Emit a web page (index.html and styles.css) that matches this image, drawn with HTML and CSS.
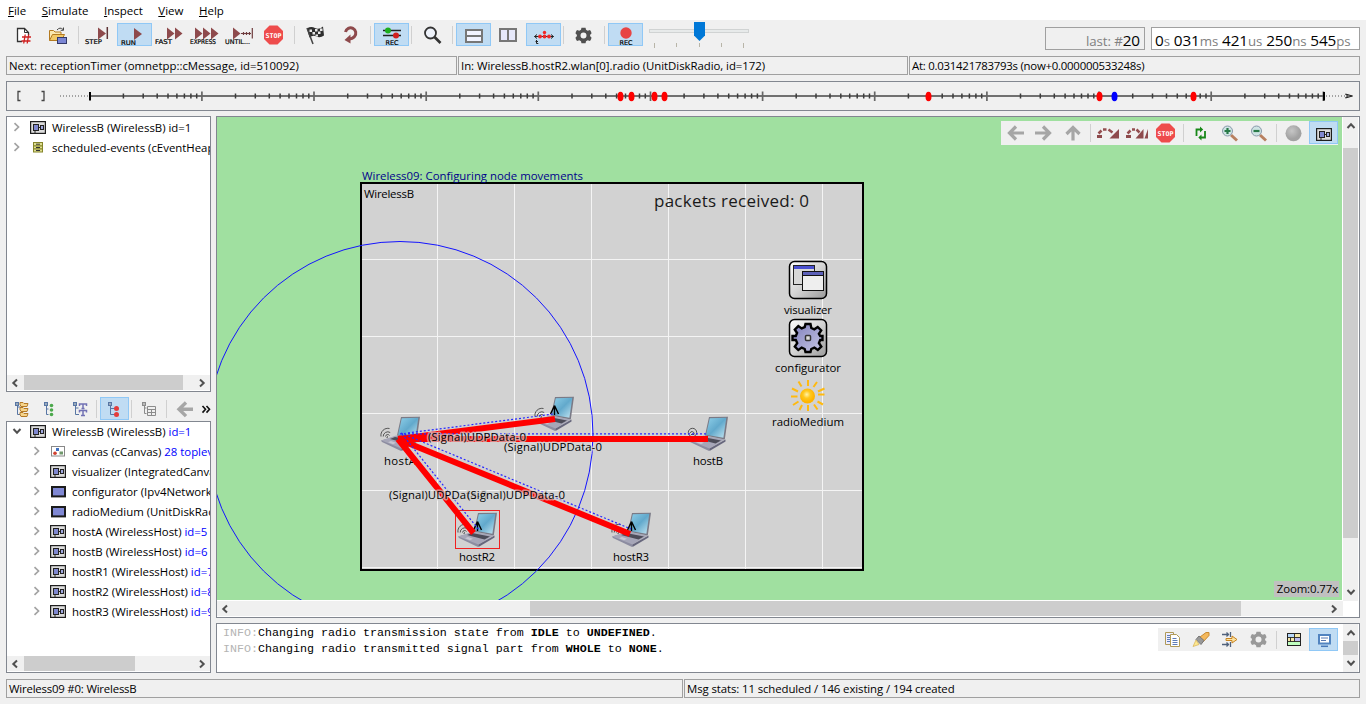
FILE: index.html
```html
<!DOCTYPE html>
<html lang="en">
<head>
<meta charset="utf-8">
<title>OMNeT++ Qtenv - Wireless09</title>
<link rel="stylesheet" href="styles.css">
</head>
<body>
<svg class="defs" width="0" height="0">
  <defs>
    <symbol id="module" viewBox="0 0 16 13"><rect x=".6" y=".6" width="14.8" height="11.8" fill="#dcdcdc" stroke="#1e1e1e" stroke-width="1.2"/><path d="M9 6.5h2M5 9v3" stroke="#222" fill="none"/><rect x="3.5" y="3.5" width="5" height="6" fill="#8088d0" stroke="#222"/><rect x="10.5" y="4.5" width="3" height="4" fill="#a0a8e0" stroke="#222"/></symbol>
    <symbol id="simple" viewBox="0 0 16 13"><rect x="2" y="2" width="13" height="9.4" fill="#8088d4" stroke="#1c1c1c" stroke-width="2"/></symbol>
    <symbol id="chev" viewBox="0 0 8 10"><path d="M1.500 1.200l4 3.800-4 3.800" fill="none" stroke="#a3a3a3" stroke-width="1.700"/></symbol>
    <symbol id="sl" viewBox="0 0 8 10"><path d="M6 1.500L2.300 5 6 8.500" fill="none" stroke="#505050" stroke-width="2"/></symbol>
    <symbol id="sr" viewBox="0 0 8 10"><path d="M2 1.500L5.700 5 2 8.500" fill="none" stroke="#505050" stroke-width="2"/></symbol>
    <symbol id="su" viewBox="0 0 10 8"><path d="M1.500 6L5 2.300 8.500 6" fill="none" stroke="#505050" stroke-width="2"/></symbol>
    <symbol id="sd" viewBox="0 0 10 8"><path d="M1.500 2L5 5.700 8.500 2" fill="none" stroke="#505050" stroke-width="2"/></symbol>
    <symbol id="stop" viewBox="0 0 20 20"><path d="M6 .5h8L19.500 6v8L14 19.500H6L.5 14V6z" fill="#ee4c4c"/><text x="2" y="12.600" class="stopword" textLength="16" lengthAdjust="spacingAndGlyphs">STOP</text></symbol>
    <symbol id="gear" viewBox="-8 -8 16 16"><path fill-rule="evenodd" d="M-2-8h4l.5 2.300 1.700.9 2.300-.8 2 3.400L6.600-.7v1.400l1.900 1.500-2 3.400-2.300-.8-1.700.9L2 8h-4l-.5-2.300-1.700-.9-2.300.8-2-3.400L-6.600.7V-.7l-1.900-1.500 2-3.400 2.300.8 1.700-.9zM0-3a3 3 0 100 6 3 3 0 000-6z"/></symbol>
    <g id="decade" stroke="#3c3c3c" stroke-width="1.500"><path d="M33.700 93.500v5M53.500 93.500v5M67.500 93.500v5M78.300 93.500v5M87.200 93.500v5M94.700 93.500v5M101.200 93.500v5M107 93.500v5"/><path d="M112.200 91.500v9.500" stroke="#666" stroke-width="1.700"/></g>
    <linearGradient id="scr" x1="0" y1="0" x2="1" y2="1"><stop offset="0" stop-color="#8fd0ea"/><stop offset=".5" stop-color="#62a9cc"/><stop offset="1" stop-color="#c4e6f2"/></linearGradient>
    <linearGradient id="tile" x1="0" y1="0" x2="1" y2="1"><stop offset="0" stop-color="#fff"/><stop offset=".5" stop-color="#d4d4d4"/><stop offset="1" stop-color="#9a9a9a"/></linearGradient>
    <linearGradient id="cog" x1="0" y1="0" x2="1" y2="1"><stop offset="0" stop-color="#8080bc"/><stop offset="1" stop-color="#c6c6e4"/></linearGradient>
    <radialGradient id="sun" cx=".45" cy=".4"><stop offset="0" stop-color="#fff3a8"/><stop offset=".5" stop-color="#ffc81e"/><stop offset="1" stop-color="#ffb400"/></radialGradient>
    <radialGradient id="ball" cx=".4" cy=".35"><stop offset="0" stop-color="#c6c6c6"/><stop offset="1" stop-color="#a2a2a2"/></radialGradient>
    <g id="laptop">
      <path d="M-3 2L-19 6.500-18 8 1 17 2 15.500z" fill="#8c8ca0"/>
      <path d="M-4 1.500L16.500 5.500 1.500 14.500-18.500 6.500z" fill="#a6a6b8"/>
      <path d="M-5 3L13 6.500 7.500 9.500-10 5z" fill="#4c4c58"/>
      <path d="M-9 7L-4 8.800-7 10.300-12 8.200z" fill="#c6c6d2"/>
      <path d="M1.500 14.500L17.500 5.500v2L1.500 17z" fill="#66667c"/>
      <path d="M1-17L20-17.200 16.800 5.500-3 1.500z" fill="#7a7a86"/>
      <path d="M1.800-15.800L18.300-16.200 15.400 3.800-1.900.7z" fill="url(#scr)"/>
    </g>
    <g id="waves" fill="none" stroke="#444" stroke-width=".9"><path d="M-14.500 2.500a2.200 2.200 0 014-1M-16.800 2.500a4.600 4.600 0 017-4M-19 2.500a7 7 0 018.500-8M-13 4a1.200 1.200 0 011-1.500"/></g>
    <path id="ant" d="M.5-8.500V1M.5-8.500L-3.500 0M.5-8.500L4.500 0" stroke="#000" stroke-width="1.400" fill="none"/>
  </defs>
</svg>

<nav class="menubar"><span><u>F</u>ile</span><span><u>S</u>imulate</span><span><u>I</u>nspect</span><span><u>V</u>iew</span><span><u>H</u>elp</span></nav>

<header class="toolbar">
  <div class="tools">
    <svg class="btn" viewBox="6 23 35 23"><path d="M22 41.500h-4.500v-13h7l4 4v2.500" fill="#fff" stroke="#333" stroke-width="1.300"/><path d="M24.500 28.500v4h4" fill="none" stroke="#333"/><path d="M25.200 34.500l-1.500 9M28.700 34.500l-1.500 9M22 37h9M21.500 41h9" stroke="#d02020" stroke-width="1.300"/></svg>
    <svg class="btn" viewBox="41 23 35 23"><path d="M49.500 40.500v-10h4l1.500 1.500h6v3" fill="#fbe8b0" stroke="#b47a20"/><path d="M49.500 40.500l3-6h12l-3 6z" fill="#f2c968" stroke="#b47a20"/><path d="M57 30q3-3.500 6-.5M63.500 27.500v2.800h-2.800" fill="none" stroke="#444"/><rect x="57.500" y="37.500" width="9" height="6" fill="#7b86d4" stroke="#333a68"/></svg>
    <i class="sep"></i>
    <svg class="btn" viewBox="82 23 35 23"><path d="M98 27.500l8 6-8 6z" fill="#8e4a4c"/><path d="M107.300 27v12" stroke="#5e3436" stroke-width="1.500"/><text x="85" y="44" textLength="17" lengthAdjust="spacingAndGlyphs">STEP</text></svg>
    <svg class="btn on" viewBox="117 23 35 23"><path d="M134 28l8 6-8 6z" fill="#8e4a4c"/><text x="121" y="45" textLength="15" lengthAdjust="spacingAndGlyphs">RUN</text></svg>
    <svg class="btn" viewBox="152 23 35 23"><path d="M167 27.500l7.500 6-7.500 6zM175 27.500l7.500 6-7.500 6z" fill="#8e4a4c"/><text x="155" y="44" textLength="17" lengthAdjust="spacingAndGlyphs">FAST</text></svg>
    <svg class="btn" viewBox="187 23 35 23"><path d="M195 27.500l7.500 6-7.500 6zM203 27.500l7.500 6-7.500 6zM211 27.500l7.500 6-7.500 6z" fill="#8e4a4c"/><text x="190" y="44" textLength="26" lengthAdjust="spacingAndGlyphs">EXPRESS</text></svg>
    <svg class="btn" viewBox="222 23 35 23"><path d="M233 27.500l7.500 6-7.500 6z" fill="#8e4a4c"/><path d="M241 33.500h10M243.500 32v3M246.500 32v3M249.500 32v3M252.300 28v10.500" stroke="#6e3c3e" stroke-width="1.200"/><text x="225" y="44" textLength="25" lengthAdjust="spacingAndGlyphs">UNTIL...</text></svg>
    <svg class="btn" viewBox="257 23 35 23"><use href="#stop" x="263" y="25" width="21" height="20"/></svg>
    <i class="sep"></i>
    <svg class="btn" viewBox="298 23 35 23"><path d="M307 28.500q4-2.500 8-.5t8-1.500l1 9q-4 3-7.500 1t-7 1z" fill="#2e2e2e"/><path d="M307 28l6 16" stroke="#444" stroke-width="1.500"/><path d="M309.500 29.500h2.500v2.500h-2.500zM315 29h2.500v2.500h-2.500zM320 28.500h2.500v2.500H320zM312.500 32h2.500v2.500h-2.500zM318 31.500h2.500V34H318zM315.500 34.500h2.500v2h-2.500z" fill="#e8e8e8"/></svg>
    <svg class="btn" viewBox="333 23 35 23"><path d="M345.500 32a5.200 5.200 0 119 4.500q-2 2.500-6 2.500" fill="none" stroke="#8e4a4c" stroke-width="3"/><path d="M350.500 34.500v9l-6-3.500z" fill="#8e4a4c"/></svg>
    <i class="sep"></i>
    <svg class="btn on" viewBox="374 23 35 23"><path d="M383 30.500h18M383 35.500h18" stroke="#222" stroke-width="1.500"/><circle cx="388" cy="30.500" r="3" fill="#1cae1c"/><circle cx="396" cy="35.500" r="3" fill="#d22020"/><text x="385.500" y="45" textLength="13" lengthAdjust="spacingAndGlyphs">REC</text></svg>
    <i class="sep"></i>
    <svg class="btn" viewBox="415 23 35 23"><circle cx="430.500" cy="33" r="5.500" fill="#eef2fa" stroke="#333" stroke-width="1.800"/><path d="M434.500 37l6 6" stroke="#333" stroke-width="2.600"/></svg>
    <i class="sep"></i>
    <svg class="btn on" viewBox="456 23 35 23"><rect x="466" y="30" width="16" height="12" fill="#f2f4ff" stroke="#777" stroke-width="2"/><path d="M466 36h16" stroke="#777" stroke-width="2"/></svg>
    <svg class="btn" viewBox="491 23 35 23"><rect x="500" y="29" width="16" height="12" fill="#e6e8fa" stroke="#777" stroke-width="2"/><path d="M508 29v12" stroke="#777" stroke-width="2"/></svg>
    <svg class="btn on" viewBox="526 23 35 23"><path d="M534.500 36.500h19M537 34.500l-2.500 2 2.500 2M551 34.500l2.500 2-2.500 2M536.500 40v3.500h1.800M535.500 41.500h2.500" stroke="#222" stroke-width="1" fill="none"/><g fill="#f02828"><circle cx="540" cy="36.500" r="1.900"/><circle cx="544.500" cy="36.500" r="1.900"/><circle cx="549" cy="36.500" r="1.900"/><circle cx="544.500" cy="32.500" r="1.700"/></g></svg>
    <i class="sep"></i>
    <svg class="btn" viewBox="567 23 35 23"><use href="#gear" x="575.500" y="27.500" width="16" height="16" fill="#505050"/></svg>
    <i class="sep"></i>
    <svg class="btn on" viewBox="608 23 35 23"><circle cx="626" cy="33" r="5.700" fill="#e84444"/><text x="619.500" y="45" textLength="13" lengthAdjust="spacingAndGlyphs">REC</text></svg>
    <svg class="slider" viewBox="649 20 100 30" width="100" height="30"><rect x="649.500" y="29.500" width="99" height="3" fill="#e7eaea" stroke="#d0d3d3"/><path d="M654.500 43v5M676.500 43v4M699.500 43v4M721.500 43v4M743.500 43v5" stroke="#b8b5a8"/><path d="M694 22h11v13.500l-5.500 5.500-5.500-5.500z" fill="#0078d7"/></svg>
  </div>
  <div class="counter last"><small>last: #</small>20</div>
  <div class="counter time">0<small>s</small> 031<small>ms</small> 421<small>us</small> 250<small>ns</small> 545<small>ps</small></div>
</header>

<section class="status next"><div>Next: receptionTimer (omnetpp::cMessage, id=510092)</div><div class="in">In: WirelessB.hostR2.wlan[0].radio (UnitDiskRadio, id=172)</div><div class="at">At: 0.031421783793s (now+0.000000533248s)</div></section>

<section class="timeline">
  <svg viewBox="7 82 1352 28" width="1352" height="28">
    <path d="M20.500 91.500H18v9h2.500M41.500 91.500H44v9h-2.500" fill="none" stroke="#444" stroke-width="1.300"/>
    <path d="M60 96h30M1326 96h22" stroke="#555" stroke-dasharray="1 2"/>
    <path d="M90 96h1234" stroke="#707070" stroke-width="2"/>
    <use href="#decade" x="89.700"/><use href="#decade" x="201.800"/><use href="#decade" x="314"/><use href="#decade" x="426.100"/><use href="#decade" x="538.300"/><use href="#decade" x="650.400"/><use href="#decade" x="762.500"/><use href="#decade" x="874.700"/><use href="#decade" x="986.800"/><use href="#decade" x="1099"/><use href="#decade" x="1211.200"/>
    <path d="M90 92v8.500M1324 92v8.500" stroke="#000" stroke-width="2"/>
    <path d="M1345.500 94l7 2-7 2 2-2z" fill="#999" stroke="#222"/>
    <g fill="#f00"><ellipse cx="620.500" cy="96.500" rx="3" ry="4.800"/><ellipse cx="631.500" cy="96.500" rx="3" ry="4.800"/><ellipse cx="654.500" cy="96.500" rx="3" ry="4.800"/><ellipse cx="664.500" cy="96.500" rx="3" ry="4.800"/><ellipse cx="928.500" cy="96.500" rx="3" ry="4.800"/><ellipse cx="1099.500" cy="96.500" rx="3" ry="4.800"/><ellipse cx="1193.500" cy="96.500" rx="3" ry="4.800"/><ellipse cx="1114.500" cy="96.500" rx="3" ry="4.800" fill="#00f"/></g>
  </svg>
</section>

<main class="main">
  <aside class="side">
    <div class="panel objects">
      <ul class="tree">
        <li><svg class="chev"><use href="#chev"/></svg><svg class="ico"><use href="#module"/></svg>WirelessB (WirelessB) id=1</li>
        <li><svg class="chev"><use href="#chev"/></svg><svg class="ico" viewBox="0 0 16 13"><g fill="#dede90" stroke="#85852a"><rect x="3.500" y="1.500" width="9" height="3.500"/><rect x="3.500" y="5" width="9" height="3"/><rect x="3.500" y="8" width="9" height="3"/></g><path d="M6 3.200h4M6 6.500h4M6 9.500h4" stroke="#333"/></svg>scheduled-events (cEventHeap)</li>
      </ul>
      <div class="hbar"><svg><use href="#sl"/></svg><b class="t1"></b><svg><use href="#sr"/></svg></div>
    </div>
    <div class="treetools">
      <svg class="tb" viewBox="7 397 29 23"><path d="M17.500 404v10.500h3.500M17.500 407h3" stroke="#5876a4" fill="none"/><rect x="15.500" y="402.500" width="3" height="3" fill="#9ab" stroke="#5876a4"/><path d="M20 404.500v-2h3l1 1h4l-1 3h-6zM20 409.500v-2h3l1 1h4l-1 3h-6zM20 414.500v-2h3l1 1h4l-1 3h-6z" fill="#f6d48a" stroke="#b47a28"/></svg>
      <svg class="tb" viewBox="36 397 29 23"><path d="M46.500 405v9.500h2M46.500 409h2" stroke="#5876a4" fill="none"/><rect x="44.500" y="402.500" width="3" height="3" fill="#9ab" stroke="#5876a4"/><g fill="#4ca84c"><circle cx="51.500" cy="405.500" r="1.800"/><circle cx="51.500" cy="410" r="1.800"/><circle cx="51.500" cy="414.500" r="1.800"/></g></svg>
      <svg class="tb" viewBox="65 397 29 23"><path d="M75.500 405v9.500h3.500M75.500 408h3" stroke="#5876a4" fill="none"/><rect x="73.500" y="402.500" width="3" height="3" fill="#9ab" stroke="#5876a4"/><path d="M79.500 406v-2h7v2M83 404v5M79.500 412.500v-2h7v2M83 410v5.500M81 415.500h4M81.500 408.500h3" stroke="#7272b4" stroke-width="1.500" fill="none"/></svg>
      <i class="sep"></i>
      <svg class="tb on" viewBox="100 397 29 23"><path d="M110.500 405v9.500h4M110.500 408.500h4" stroke="#5876a4" fill="none"/><rect x="108.500" y="402.500" width="3" height="3" fill="#9ab" stroke="#5876a4"/><circle cx="116.500" cy="408.500" r="2.500" fill="#e43c3c"/><circle cx="116.500" cy="414.500" r="2.500" fill="#e43c3c"/></svg>
      <i class="sep"></i>
      <svg class="tb" viewBox="135 397 29 23"><path d="M144.500 405v8.500h2M144.500 408h2M147.500 406.500h8v9h-8zM147.500 409.500h8M147.500 412.500h8M151.500 409.500v6" stroke="#8c8c8c" fill="none"/><rect x="142.500" y="402.500" width="3" height="3" fill="#bbb" stroke="#8c8c8c"/></svg>
      <i class="sep"></i>
      <svg class="tb" viewBox="170 397 29 23"><path d="M193 409.300h-12M186 402.500l-7 6.800 7 6.800" stroke="#a6a6a6" stroke-width="3.400" fill="none"/></svg>
      <svg class="more" viewBox="199 397 12 23"><path d="M202.500 406l3 3.300-3 3.300M206.500 406l3 3.300-3 3.300" stroke="#111" stroke-width="1.600" fill="none"/></svg>
    </div>
    <div class="panel components">
      <ul class="tree">
        <li><svg class="chev open"><use href="#sd"/></svg><svg class="ico"><use href="#module"/></svg>WirelessB (WirelessB) <em>id=1</em></li>
        <li class="kid"><svg class="chev"><use href="#chev"/></svg><svg class="ico" viewBox="0 0 16 13"><rect x="1.500" y="1.500" width="13" height="9.500" fill="#fff" stroke="#888"/><path d="M6 3h3v3H6z" fill="#4070c0"/><circle cx="5" cy="8.300" r="1.800" fill="#d04030"/><path d="M9.500 6.500h3.500v3H9.500z" fill="#70986c"/></svg>canvas (cCanvas) <em>28 toplevel figures</em></li>
        <li class="kid"><svg class="chev"><use href="#chev"/></svg><svg class="ico"><use href="#module"/></svg>visualizer (IntegratedCanvas)</li>
        <li class="kid"><svg class="chev"><use href="#chev"/></svg><svg class="ico"><use href="#simple"/></svg>configurator (Ipv4NetworkConf)</li>
        <li class="kid"><svg class="chev"><use href="#chev"/></svg><svg class="ico"><use href="#simple"/></svg>radioMedium (UnitDiskRadio)</li>
        <li class="kid"><svg class="chev"><use href="#chev"/></svg><svg class="ico"><use href="#module"/></svg>hostA (WirelessHost) <em>id=5</em></li>
        <li class="kid"><svg class="chev"><use href="#chev"/></svg><svg class="ico"><use href="#module"/></svg>hostB (WirelessHost) <em>id=6</em></li>
        <li class="kid"><svg class="chev"><use href="#chev"/></svg><svg class="ico"><use href="#module"/></svg>hostR1 (WirelessHost) <em>id=7</em></li>
        <li class="kid"><svg class="chev"><use href="#chev"/></svg><svg class="ico"><use href="#module"/></svg>hostR2 (WirelessHost) <em>id=8</em></li>
        <li class="kid"><svg class="chev"><use href="#chev"/></svg><svg class="ico"><use href="#module"/></svg>hostR3 (WirelessHost) <em>id=9</em></li>
      </ul>
      <div class="hbar"><svg><use href="#sl"/></svg><b class="t2"></b><svg><use href="#sr"/></svg></div>
    </div>
  </aside>

  <div class="work">
    <div class="panel network">
      <svg class="canvas" viewBox="217 117 1125 483" width="1125" height="483">
        <rect x="217" y="117" width="1125" height="483" fill="#a0e0a0"/>
        <rect x="361" y="183" width="502" height="387" fill="#d2d2d2"/>
        <path d="M437.500 184v385M514.500 184v385M591.500 184v385M668.500 184v385M745.500 184v385M822.500 184v385M362 259.500h500M362 336.500h500M362 413.500h500M362 490.500h500M362 567.500h500" stroke="#f4f4f4"/>
        <rect x="361" y="183" width="502" height="387" fill="none" stroke="#000" stroke-width="2"/>
        <text x="362" y="180" textLength="221" fill="#00008b">Wireless09: Configuring node movements</text>
        <text x="364" y="198" textLength="50">WirelessB</text>
        <text x="654" y="207" textLength="155" class="big">packets received: 0</text>

        <rect x="789.500" y="261.500" width="37" height="37" rx="5" fill="url(#tile)" stroke="#000" stroke-width="1.500"/>
        <rect x="793.500" y="265.500" width="21" height="19" fill="#d8d8d8" stroke="#222"/><rect x="794" y="266" width="20" height="3" fill="#4a50d0"/>
        <rect x="802.500" y="271.500" width="21" height="19" fill="#eee" stroke="#111"/><path d="M803 272h20v3h-20z" fill="#5c60b8"/><path d="M802 275.500h22" stroke="#111"/>
        <text x="784" y="314" textLength="48">visualizer</text>
        <rect x="789.500" y="319.500" width="37" height="37" rx="5" fill="url(#tile)" stroke="#000" stroke-width="1.500"/>
        <path transform="translate(808 338)" d="M-2.500-14h5l.8 4 3 1.300 3.400-2.300 3.500 3.500-2.300 3.300 1.300 2.200h2.300v4h-2.300l-1.300 3 2.400 3.500-3.500 3.500-3.400-2.400-3.100 1.400-.8 3h-5l-.8-3-3-1.400-3.400 2.400-3.500-3.500 2.400-3.400-1.400-3.100h-3.300v-4h3.300l1.300-3-2.300-3.400 3.500-3.500 3.400 2.300 3-1.300z" fill="url(#cog)" stroke="#000" stroke-width="2.400"/>
        <rect x="805.500" y="335.500" width="5" height="5" rx="1" fill="#ddd" stroke="#333" stroke-width="1.500"/>
        <text x="775" y="372" textLength="66">configurator</text>
        <g stroke="#ffba10" stroke-width="2"><path d="M808 380v6M808 405v6M791 396.500h6.500M818 394.500h6.500M798.500 381.500l3 5M817 382l-3.500 5M792 388.500l6 3M824.500 388.500l-6.500 3M793 405l5.500-3.500M823 404.500l-5.500-3M799.500 410l2.500-5M817.500 409.500l-3.500-5"/></g>
        <circle cx="807.500" cy="396" r="7.500" fill="url(#sun)"/>
        <text x="772" y="426" textLength="72">radioMedium</text>

        <circle cx="400" cy="434.500" r="193" fill="none" stroke="#1414ff"/>
        <use href="#laptop" x="400" y="434"/><use href="#waves" x="400" y="434"/>
        <use href="#laptop" x="554" y="414"/><use href="#waves" x="554" y="414"/><use href="#ant" x="554" y="414"/>
        <use href="#laptop" x="708" y="434"/><g fill="none" stroke="#444" stroke-width=".9"><circle cx="692.500" cy="432.500" r="4.200"/><path d="M690 433a2 2 0 114 1.500h-3"/></g>
        <use href="#laptop" x="477" y="530"/><use href="#waves" x="477" y="530"/><use href="#ant" x="477" y="530"/>
        <use href="#laptop" x="631" y="530"/><use href="#waves" x="631" y="530"/><use href="#ant" x="631" y="530"/>
        <rect x="455.500" y="510.500" width="44" height="38" fill="none" stroke="#f02020"/>
        <text x="384" y="465" textLength="32">hostA</text>
        <text x="693" y="465" textLength="30">hostB</text>
        <text x="459" y="561" textLength="36">hostR2</text>
        <text x="613" y="561" textLength="36">hostR3</text>
        <path d="M398 439L555 419M398 439H708M398 439L473.500 533M398 439L630 534" stroke="#f00" stroke-width="6"/>
        <path d="M400 434L554 414M400 433.800H708M402 434L479 530M401 433L631 529" stroke="#2828ff" stroke-dasharray="2 2" stroke-width="1.200"/>
        <g class="halo"><text x="428" y="441" textLength="98">(Signal)UDPData-0</text><text x="504" y="451" textLength="98">(Signal)UDPData-0</text><text x="389" y="499" textLength="98">(Signal)UDPData-0</text><text x="467" y="499" textLength="98">(Signal)UDPData-0</text></g>
      </svg>
      <div class="vbar"><svg><use href="#su"/></svg><b class="t3"></b><svg><use href="#sd"/></svg></div>
      <div class="hbar wide"><svg><use href="#sl"/></svg><b class="t4"></b><svg><use href="#sr"/></svg></div>
      <div class="overtools top">
        <svg class="tb" viewBox="1001 121 29 23"><path d="M1024 133h-13M1016 126.500l-6.500 6.500 6.500 6.500" stroke="#a6a6a6" stroke-width="3.200" fill="none"/></svg>
        <svg class="tb" viewBox="1030 121 29 23"><path d="M1035 133h13M1043 126.500l6.500 6.500-6.500 6.500" stroke="#a6a6a6" stroke-width="3.200" fill="none"/></svg>
        <svg class="tb" viewBox="1059 121 29 23"><path d="M1073 140.500v-13M1066.500 134l6.500-6.500 6.500 6.500" stroke="#a6a6a6" stroke-width="3.200" fill="none"/></svg>
        <i class="sep"></i>
        <svg class="tb" viewBox="1094 121 29 23"><path d="M1098.500 133.500l3-3M1103 129.500h3.500M1108.500 129.500l4 3" fill="none" stroke="#944e50" stroke-width="2.500"/><path d="M1119 129v9.500h-9.500z" fill="#8e4a4c"/><path d="M1097 135h5v3h-5z" fill="#8e4a4c"/></svg>
        <svg class="tb" viewBox="1123 121 29 23"><path d="M1127.500 133.500l3-3M1132 129.500h3M1136.500 129.500l3 3" fill="none" stroke="#944e50" stroke-width="2.500"/><path d="M1143.500 129v9.500h-8z" fill="#8e4a4c"/><path d="M1148 129v9.500h-3.500zM1126 135h5v3h-5z" fill="#8e4a4c"/></svg>
        <svg class="tb" viewBox="1152 121 29 23"><use href="#stop" x="1155.500" y="123" width="20" height="20"/></svg>
        <i class="sep"></i>
        <svg class="tb" viewBox="1187 121 29 23"><path d="M1196.500 136v-6.500h4M1205 131v6.500h-4" fill="none" stroke="#188818" stroke-width="1.800"/><path d="M1200 126.500v6l3.200-3zM1201.500 134.500v6l-3.200-3z" fill="#188818"/></svg>
        <svg class="tb" viewBox="1216 121 29 23"><path d="M1231 135l6 5.500" stroke="#b88060" stroke-width="3"/><circle cx="1227.500" cy="131" r="5" fill="#cfe4e4" stroke="#89a"/><path d="M1224.500 131h6M1227.500 128v6" stroke="#287a48" stroke-width="2.200"/></svg>
        <svg class="tb" viewBox="1245 121 29 23"><path d="M1260 135l6 5.500" stroke="#b88060" stroke-width="3"/><circle cx="1256.500" cy="131" r="5" fill="#cfe4e4" stroke="#89a"/><path d="M1253.500 131h6" stroke="#287a48" stroke-width="2.200"/></svg>
        <i class="sep"></i>
        <svg class="tb" viewBox="1280 121 29 23"><circle cx="1293.500" cy="133.300" r="8" fill="url(#ball)"/></svg>
        <svg class="tb on" viewBox="1309 121 29 23"><use href="#module" x="1316" y="128" width="16" height="13"/></svg>
      </div>
      <div class="zoom">Zoom:0.77x</div>
    </div>
    <div class="panel log">
      <pre><i>INFO:</i>Changing radio transmission state from <b>IDLE</b> to <b>UNDEFINED</b>.
<i>INFO:</i>Changing radio transmitted signal part from <b>WHOLE</b> to <b>NONE</b>.</pre>
      <div class="vbar"><svg><use href="#su"/></svg><b class="t5"></b><svg><use href="#sd"/></svg></div>
      <div class="overtools">
        <svg class="tb" viewBox="1158 628 29 23"><path d="M1165.500 632.500h8v12h-8z" fill="#eef" stroke="#b09a58"/><path d="M1170.500 634.500h6l3 3v9h-9z" fill="#fff" stroke="#b09a58"/><path d="M1172.500 638.500h4M1172.500 640.500h5M1172.500 642.500h5M1172.500 644.500h5M1167 635.500h3M1167 637.500h3M1167 639.500h3M1167 641.500h3" stroke="#5c7cb8"/></svg>
        <svg class="tb" viewBox="1187 628 29 23"><path d="M1200 637l6-4.500 3 0v3l-6.500 7z" fill="#f4b85c" stroke="#c88a30"/><path d="M1199 636l5 4.500-3 4-5-5z" fill="#999" stroke="#777"/><path d="M1196 640l-3 6.500 6-2z" fill="#fce890" stroke="#d8b050" stroke-width=".7"/></svg>
        <svg class="tb" viewBox="1216 628 29 23"><path d="M1222 634.500h7M1222 644.500h7M1226.500 632.500l2 2-2 2M1226.500 642.500l2 2-2 2M1230.500 632v5M1230.500 642v5" fill="none" stroke="#50627c" stroke-width="1.300"/><path d="M1226 638.500h6v-2.500l5 3.500-5 3.500v-2.500h-6z" fill="#fce2a0" stroke="#c88420"/></svg>
        <svg class="tb" viewBox="1245 628 29 23"><use href="#gear" x="1250.500" y="631.500" width="16" height="16" fill="#999"/></svg>
        <i class="sep"></i>
        <svg class="tb" viewBox="1280 628 29 23"><rect x="1287.500" y="633.500" width="13" height="12" fill="#f4e6a8" stroke="#222"/><path d="M1288 634h6v3h-6z" fill="#b8d8fa"/><path d="M1295 638h5v3h-5z" fill="#bcbcf4"/><path d="M1288 642h12v3h-12z" fill="#c0ffc0"/><path d="M1287 637.500h14M1287 641.500h14M1294.500 633.500v8M1290.500 637.500v4" stroke="#222" stroke-width=".9"/></svg>
        <svg class="tb on" viewBox="1309 628 29 23"><rect x="1319" y="635" width="11" height="8.500" fill="#fff" stroke="#5284c0" stroke-width="2"/><path d="M1321 638h7M1321 640.500h5" stroke="#5878b0"/><path d="M1321 646.300h7" stroke="#4878b8" stroke-width="1.500"/></svg>
      </div>
    </div>
  </div>
</main>

<footer class="status foot"><div>Wireless09 #0: WirelessB</div><div class="stats">Msg stats: 11 scheduled / 146 existing / 194 created</div></footer>
</body>
</html>
```
FILE: styles.css
```css
* { box-sizing: border-box; }
body { margin: 0; width: 1366px; height: 704px; overflow: hidden; display: flex; flex-direction: column; background: #f0f0f0; color: #000; font: 11.4px "Open Sans", "Noto Sans", sans-serif; }
svg { display: block; flex: none; }
svg text { font: 11.4px "Open Sans", "Noto Sans", sans-serif; }
.defs { position: absolute; }
.menubar { height: 20px; background: #fff; display: flex; gap: 15.5px; padding-left: 8px; line-height: 22px; font-size: 11.5px; }
.menubar u { text-underline-offset: 1px; }

.toolbar { height: 36px; display: flex; align-items: flex-start; padding: 0 6px; }
.tools { display: flex; align-items: flex-start; padding-top: 3px; flex: 1; }
.btn { width: 35px; height: 23px; }
.btn text { font: 6.5px "DejaVu Sans", sans-serif; fill: #000; stroke: #000; stroke-width: .2px; }
.tb { width: 29px; height: 23px; }
.on { background: #c0dcf3; outline: 1px solid #90c8f6; outline-offset: -1px; }
.sep { flex: none; width: 6px; height: 18px; margin-top: 3px; border-left: 1px solid #d0d0d0; transform: translateX(2px); }
.slider { margin: -3px 0 0 6px; }
.stopword { font: bold 6.5px "DejaVu Sans Mono", monospace !important; fill: #fff; }
.btn .stopword { stroke: none; }
.counter { height: 23px; margin-top: 7px; border: 1px solid #a0a0a0; font-size: 15.3px; line-height: 24px; white-space: pre; letter-spacing: -.1px; }
.counter small { font-size: 13.3px; color: #808080; }
.last { width: 100px; text-align: right; padding-right: 4px; margin-right: 6px; }
.time { width: 209px; padding-left: 3px; background: #fff; }

.status { display: flex; gap: 1px; padding: 0 6px; height: 19px; }
.status div { border: 1px solid #a0a0a0; padding-left: 2px; line-height: 18px; white-space: nowrap; width: 451px; }
.status .in { width: 450px; letter-spacing: -.05px; }
.status .at { letter-spacing: -.24px; }
.timeline { margin: 6px 6px 5px; height: 30px; border: 1px solid #828790; }

.main { display: flex; gap: 5px; padding: 0 6px; height: 557px; }
.side { width: 205px; display: flex; flex-direction: column; }
.panel { position: relative; background: #fff; border: 1px solid #828790; overflow: hidden; }
.objects { height: 276px; display: flex; flex-direction: column; justify-content: space-between; padding-bottom: 1px; }
.components { height: 252px; display: flex; flex-direction: column; justify-content: space-between; padding-bottom: 1px; }
.tree { list-style: none; margin: 0; padding: 0; }
.tree li { display: flex; align-items: center; height: 20px; white-space: pre; padding-left: 6px; }
.components .tree { margin-top: -1px; }
.tree .kid { padding-left: 26px; }
.tree em { font-style: normal; color: #00f; }
.chev { width: 8px; height: 10px; margin-right: 9px; }
.chev.open { width: 10px; height: 8px; margin: 0 8px 0 -1px; }
.ico { width: 16px; height: 13px; margin-right: 6px; }
.hbar { height: 15px; background: #f0f0f0; display: flex; align-items: center; padding: 0 4px; justify-content: space-between; }
.hbar svg { width: 8px; height: 10px; }
.hbar b { height: 15px; background: #cdcdcd; }
.t1 { width: 159px; margin: 0 auto 0 5px; }
.t2 { width: 111px; margin: 0 auto 0 5px; }
.treetools { height: 29px; display: flex; padding: 5px 0 0 1px; }
.more { width: 12px; height: 23px; }

.work { width: 1144px; display: flex; flex-direction: column; gap: 5px; }
.network { height: 502px; display: grid; grid-template-columns: 1126px 15px; grid-template-rows: 484px 15px; }
.vbar { background: #f0f0f0; display: flex; flex-direction: column; align-items: center; padding: 5px 0; }
.vbar svg { width: 10px; height: 8px; }
.vbar b { width: 15px; background: #cdcdcd; }
.t3 { height: 390px; margin: 18px 0 auto; }
.hbar .t4 { width: 711px; margin-left: 301px; margin-right: auto; }
.wide { grid-column: 1; padding-right: 5px; }
.overtools { position: absolute; top: 4px; right: 21px; height: 23px; display: flex; background: #f0f0f0; }
.overtools.top { height: 24px; }
.zoom { position: absolute; right: 20px; bottom: 20px; height: 16px; padding: 0 1px 0 3px; background: #c0c0c0; line-height: 16px; letter-spacing: -.1px; }
.canvas .big { font-size: 17px; fill: #1a1a1a; }
.halo text { paint-order: stroke; stroke: rgba(210, 210, 210, .65); stroke-width: 3px; stroke-linejoin: round; }

.log { height: 50px; display: flex; justify-content: space-between; padding-right: 1px; }
.log pre { margin: 0; padding: 1px 0 0 6px; font: 11.67px/16px "Liberation Mono", monospace; }
.log pre i { font-style: normal; color: #b4b4b4; }
.log .vbar { width: 15px; }
.t5 { height: 14px; margin: auto; }
.foot { margin-top: 6px; }
.status.foot div:first-child { width: 677px; letter-spacing: -.2px; }
.status.foot .stats { width: 676px; letter-spacing: -.1px; }
```
